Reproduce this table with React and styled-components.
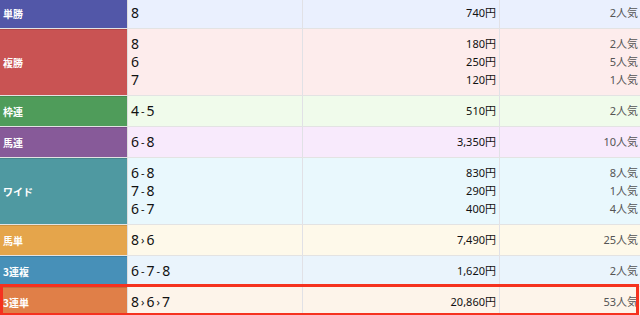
import React from "react";
import styled, { createGlobalStyle } from "styled-components";

const Global = createGlobalStyle`
  html, body { margin: 0; padding: 0; background: #ffffff; }
  body { font-family: "Noto Sans", "Noto Sans CJK JP", sans-serif; overflow: hidden; }
`;

const Table = styled.div`
  width: 640px;
  margin-top: -2px;
  display: flex;
  flex-direction: column;
`;

const Row = styled.div`
  display: grid;
  grid-template-columns: 128px 175px 197px 1fr;
  background: ${(p) => p.$bg};
  border-bottom: 1px solid #e3e3e3;
  position: relative;
  ${(p) =>
    p.$highlight &&
    `
    &::after {
      content: "";
      position: absolute;
      left: 0; right: 1px; top: -3px; bottom: 1px;
      border: 3px solid #f5321f;
      pointer-events: none;
    }
  `}
`;

const Label = styled.div`
  background: ${(p) => p.$color};
  color: #ffffff;
  font-family: "Noto Sans CJK JP", sans-serif;
  font-weight: 700;
  font-size: 10px;
  display: flex;
  align-items: center;
  padding-left: 3px;
  border-right: 1px solid #dedede;
  box-shadow: inset 0 1px 0 rgba(0, 0, 0, 0.12);
`;

const Col = styled.div`
  display: flex;
  flex-direction: column;
  padding: 6px 0;
  border-right: ${(p) => (p.$last ? "none" : "1px solid #e1e1e6")};
  align-items: ${(p) => (p.$right ? "flex-end" : "flex-start")};
  padding-left: ${(p) => (p.$right ? "0" : "3px")};
  padding-right: ${(p) => p.$pr || "0"};
`;

const Line = styled.div`
  height: 18px;
  line-height: 18px;
  white-space: nowrap;
  font-size: ${(p) => p.$size || "11px"};
  color: ${(p) => p.$color || "#111"};
  letter-spacing: ${(p) => p.$ls || "0"};
  font-family: "Noto Sans", "Noto Sans CJK JP", sans-serif;
`;

const Sep = styled.span`
  font-size: 11px;
  margin: 0 2px;
  position: relative;
  top: -1px;
`;

const data = [
  { label: "単勝", color: "#5257a8", bg: "#eaf0fe", lines: [["8", "740", "2"]] },
  {
    label: "複勝",
    color: "#c95353",
    bg: "#fdecec",
    lines: [
      ["8", "180", "2"],
      ["6", "250", "5"],
      ["7", "120", "1"],
    ],
  },
  { label: "枠連", color: "#4f9c5a", bg: "#f0fbeb", lines: [["4-5", "510", "2"]] },
  { label: "馬連", color: "#875a99", bg: "#f8eafc", lines: [["6-8", "3,350", "10"]] },
  {
    label: "ワイド",
    color: "#4f99a1",
    bg: "#e9f8fd",
    lines: [
      ["6-8", "830", "8"],
      ["7-8", "290", "1"],
      ["6-7", "400", "4"],
    ],
  },
  { label: "馬単", color: "#e5a54b", bg: "#fef9ea", lines: [["8>6", "7,490", "25"]] },
  { label: "3連複", color: "#4790b8", bg: "#eaf4fc", lines: [["6-7-8", "1,620", "2"]] },
  { label: "3連単", color: "#e07f48", bg: "#fdf4ea", lines: [["8>6>7", "20,860", "53"]], highlight: true },
];

function Combo({ text }) {
  const parts = text.split(/([->])/);
  return parts.map((p, i) =>
    p === "-" ? (
      <Sep key={i}>-</Sep>
    ) : p === ">" ? (
      <Sep key={i}>›</Sep>
    ) : (
      <span key={i}>{p}</span>
    )
  );
}

export default function App() {
  return (
    <>
      <Global />
      <Table>
        {data.map((r) => (
          <Row key={r.label} $bg={r.bg} $highlight={r.highlight}>
            <Label $color={r.color}>{r.label}</Label>
            <Col>
              {r.lines.map((l, i) => (
                <Line key={i} $size="14px">
                  <Combo text={l[0]} />
                </Line>
              ))}
            </Col>
            <Col $right $pr="3px">
              {r.lines.map((l, i) => (
                <Line key={i}>{l[1]}円</Line>
              ))}
            </Col>
            <Col $right $last $pr="2px">
              {r.lines.map((l, i) => (
                <Line key={i} $color="#555">
                  {l[2]}人気
                </Line>
              ))}
            </Col>
          </Row>
        ))}
      </Table>
    </>
  );
}
